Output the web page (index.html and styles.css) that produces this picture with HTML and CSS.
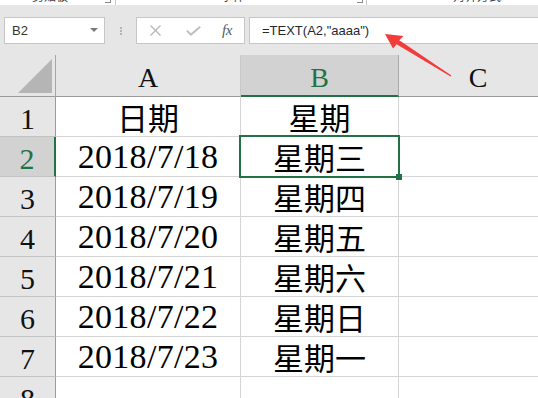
FILE: index.html
```html
<!DOCTYPE html>
<html lang="zh-CN">
<head>
<meta charset="utf-8">
<title>Excel TEXT</title>
<link rel="stylesheet" href="styles.css">
</head>
<body>
<div class="ribbon">
  <span class="grp g1">剪贴板</span>
  <span class="launch l1"></span>
  <span class="sep s1"></span>
  <span class="grp g2">字体</span>
  <span class="launch l2"></span>
  <span class="sep s2"></span>
  <span class="grp g3">对齐方式</span>
</div>

<div class="fbar">
  <div class="namebox"><span class="ref">B2</span><span class="caret"></span></div>
  <div class="grip"><i></i><i></i><i></i></div>
  <div class="fxbox">
    <svg class="ic-x" width="11" height="11" viewBox="0 0 11 11"><path d="M0.5 0.5 L10.5 10.5 M10.5 0.5 L0.5 10.5" stroke="#b6b6b6" stroke-width="1.3" fill="none"/></svg>
    <svg class="ic-ok" width="15" height="10" viewBox="0 0 15 10"><path d="M0.8 4.6 L5 8.6 L14.2 0.8" stroke="#bfbfbf" stroke-width="2" fill="none"/></svg>
    <span class="fx">fx</span>
  </div>
  <div class="formula">=TEXT(A2,"aaaa")</div>
</div>

<div class="sheet">
  <div class="corner"><svg width="55" height="41" viewBox="0 0 55 41"><polygon points="18,38 52,4 52,38" fill="#b5b5b5"/></svg></div>
  <div class="ch">A</div>
  <div class="ch sel">B</div>
  <div class="ch last">C</div>

  <div class="rh">1</div>
  <div class="c cn">日期</div>
  <div class="c cn">星期</div>
  <div class="c"></div>

  <div class="rh sel">2</div>
  <div class="c dt">2018/7/18</div>
  <div class="c cn active">星期三</div>
  <div class="c"></div>

  <div class="rh">3</div>
  <div class="c dt">2018/7/19</div>
  <div class="c cn">星期四</div>
  <div class="c"></div>

  <div class="rh">4</div>
  <div class="c dt">2018/7/20</div>
  <div class="c cn">星期五</div>
  <div class="c"></div>

  <div class="rh">5</div>
  <div class="c dt">2018/7/21</div>
  <div class="c cn">星期六</div>
  <div class="c"></div>

  <div class="rh">6</div>
  <div class="c dt">2018/7/22</div>
  <div class="c cn">星期日</div>
  <div class="c"></div>

  <div class="rh">7</div>
  <div class="c dt">2018/7/23</div>
  <div class="c cn">星期一</div>
  <div class="c"></div>

  <div class="rh">8</div>
  <div class="c"></div>
  <div class="c"></div>
  <div class="c"></div>
</div>

<svg class="arrow" width="538" height="398" viewBox="0 0 538 398">
  <polygon points="385,34 403.5,36 399.3,40.2 451.4,75.4 450.6,76.6 396.6,44.3 393,48.5" fill="#f23b3b"/>
</svg>
</body>
</html>
```

FILE: styles.css
```css
* { box-sizing: border-box; margin: 0; padding: 0; }

html, body {
  width: 538px;
  height: 398px;
  overflow: hidden;
}

body {
  position: relative;
  background: #e6e6e6;
  font-family: "Liberation Sans", Arial, sans-serif;
}

/* ribbon remnant at the very top */
.ribbon {
  height: 5px;
  background: #ffffff;
  display: flex;
  align-items: flex-start;
  overflow: hidden;
}
.grp {
  flex: none;
  font-family: "Noto Sans CJK SC", sans-serif;
  font-size: 12px;
  line-height: 16px;
  color: #444;
  margin-top: -12px;
  white-space: nowrap;
}
.g1 { margin-left: 32px; }
.g2 { margin-left: 105px; }
.g3 { margin-left: 86px; }
.launch {
  flex: none;
  width: 6px;
  height: 6px;
  margin-top: -3px;
  border-right: 1px solid #8a8a8a;
  border-bottom: 1px solid #8a8a8a;
}
.l1 { margin-left: 37px; }
.l2 { margin-left: 112px; }
.sep {
  flex: none;
  width: 1px;
  height: 5px;
  background: #c8c8c8;
}
.s1 { margin-left: 4px; }
.s2 { margin-left: 3px; }

/* formula bar */
.fbar {
  display: flex;
  height: 27px;
  margin-top: 12px;
}
.namebox {
  flex: none;
  width: 101px;
  margin-left: 4px;
  background: #fff;
  border: 1px solid #c6c6c6;
  display: flex;
  align-items: center;
  justify-content: space-between;
  padding: 0 6px 0 7px;
}
.ref {
  font-size: 13px;
  color: #333;
}
.caret {
  width: 0;
  height: 0;
  border-left: 4px solid transparent;
  border-right: 4px solid transparent;
  border-top: 4px solid #7a7a7a;
  margin-bottom: 1px;
}
.grip {
  flex: none;
  width: 3px;
  margin-left: 15px;
  display: flex;
  flex-direction: column;
  justify-content: center;
  gap: 1px;
}
.grip i {
  display: block;
  width: 2px;
  height: 2px;
  background: #b5b5b5;
}
.fxbox {
  flex: none;
  width: 109px;
  margin-left: 13px;
  background: #fff;
  border: 1px solid #c6c6c6;
  display: flex;
  align-items: center;
}
.ic-x { margin-left: 13px; display: block; }
.ic-ok { margin-left: 25px; display: block; }
.fx {
  margin-left: 21px;
  font-family: "Liberation Serif", serif;
  font-style: italic;
  font-size: 15px;
  line-height: 1;
  color: #5a5a5a;
  letter-spacing: -0.5px;
}
.formula {
  flex: 1;
  margin-left: 4px;
  background: #fff;
  border: 1px solid #c6c6c6;
  border-right: none;
  font-size: 13px;
  line-height: 25px;
  padding-left: 12px;
  color: #262633;
  white-space: nowrap;
}

/* sheet grid (column C runs past the window edge) */
.sheet {
  margin-top: 11px;
  display: grid;
  grid-template-columns: 56px 185px 158px 158px;
  grid-template-rows: 42px repeat(8, 40px);
}
.corner {
  background: #e6e6e6;
  border-right: 1px solid #a6a6a6;
  border-bottom: 1px solid #9b9b9b;
}
.corner svg { display: block; }

.ch {
  background: #e6e6e6;
  border-right: 1px solid #c8c8c8;
  border-bottom: 1px solid #9b9b9b;
  text-align: center;
  font-family: "Liberation Serif", "Times New Roman", serif;
  font-size: 28px;
  line-height: 36px;
  padding-top: 5px;
  color: #111;
}
.ch.sel {
  background: #d2d2d2;
  border-right-color: #ababab;
  border-bottom: 2px solid #217346;
  color: #217346;
}
.ch.last { border-right: none; }

.rh {
  background: #e6e6e6;
  border-right: 1px solid #9b9b9b;
  border-bottom: 1px solid #c2c2c2;
  text-align: center;
  font-family: "Liberation Serif", "Times New Roman", serif;
  font-size: 30px;
  line-height: 35px;
  padding-top: 4px;
  color: #111;
}
.rh.sel {
  background: #d2d2d2;
  border-right: 2px solid #217346;
  color: #217346;
}

.c {
  background: #fff;
  border-right: 1px solid #d4d4d4;
  border-bottom: 1px solid #d4d4d4;
  text-align: center;
  color: #000;
  white-space: nowrap;
}
.dt {
  font-family: "Liberation Serif", "Times New Roman", serif;
  font-size: 34px;
  line-height: 38px;
  letter-spacing: 0.3px;
  padding-top: 1px;
}
.cn {
  font-family: "Noto Sans CJK SC", sans-serif;
  font-size: 31px;
  line-height: 31px;
  padding-top: 4px;
}

.active { position: relative; }
.active::after {
  content: "";
  position: absolute;
  left: -2px;
  top: -2px;
  right: -2px;
  bottom: -2px;
  border: 2px solid #217346;
}
.active::before {
  content: "";
  position: absolute;
  right: -4px;
  bottom: -4px;
  width: 6px;
  height: 6px;
  background: #217346;
  z-index: 2;
}

.arrow {
  position: absolute;
  left: 0;
  top: 0;
  pointer-events: none;
}
```
